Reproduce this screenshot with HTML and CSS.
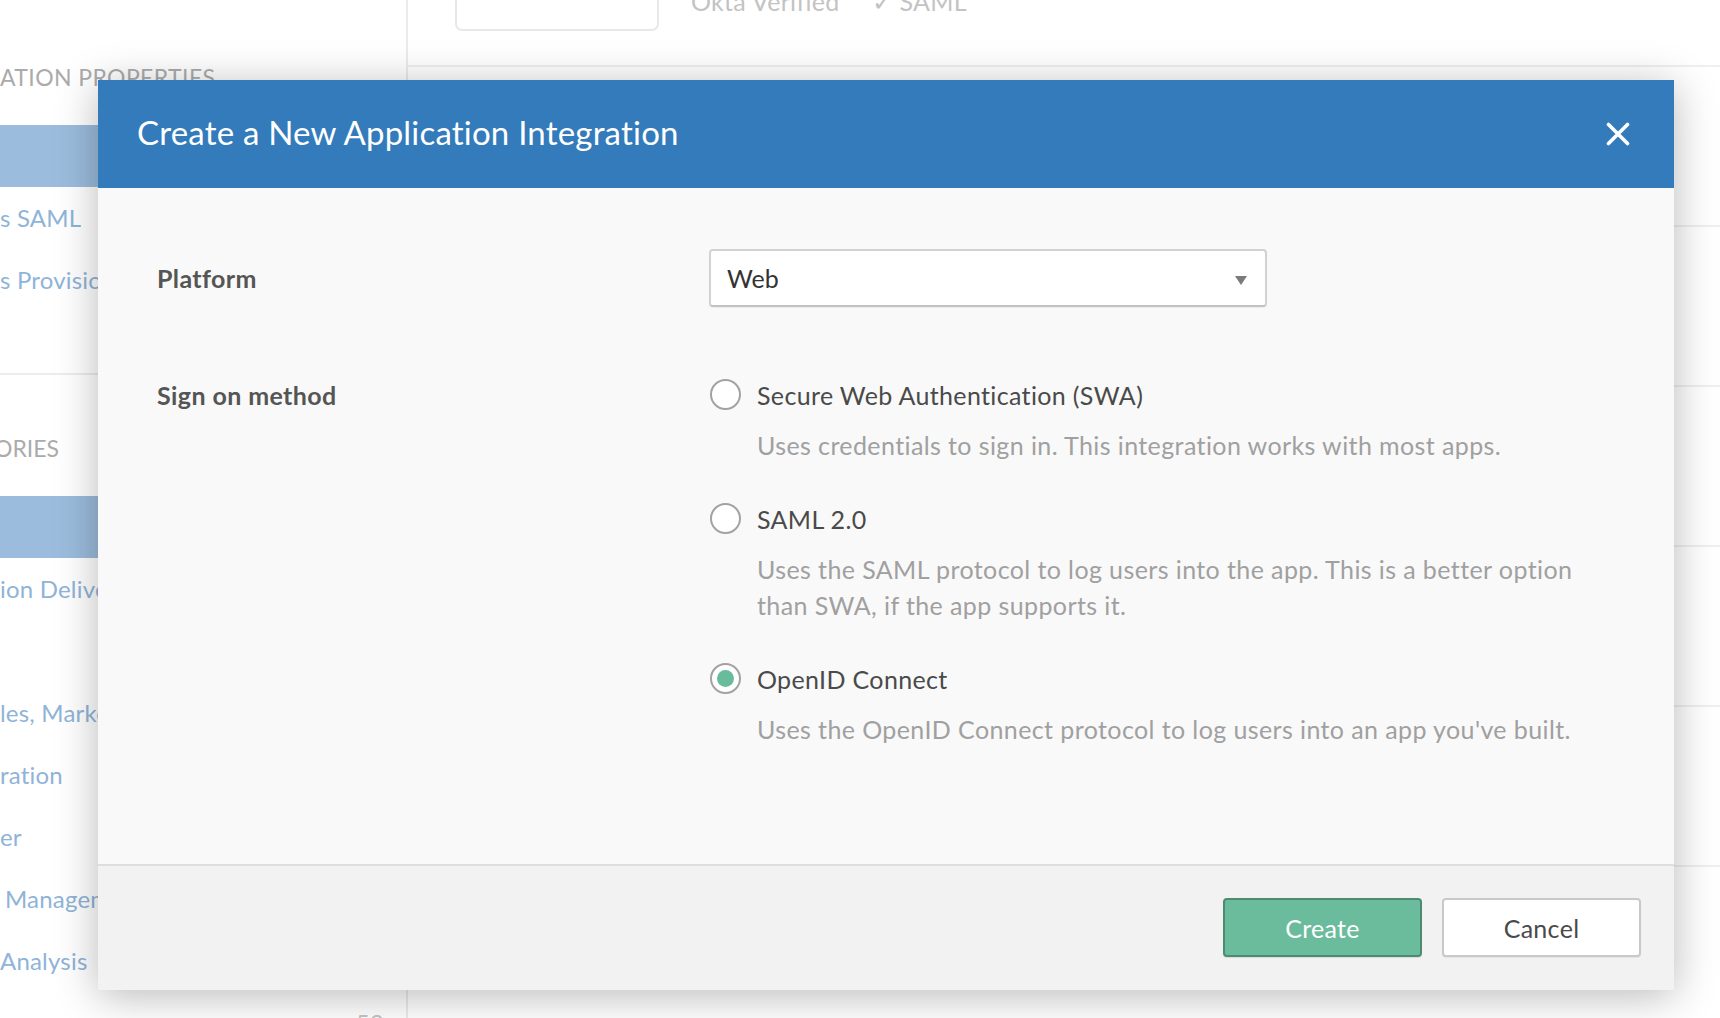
FILE: index.html
```html
<!DOCTYPE html>
<html lang="en">
<head>
<meta charset="utf-8">
<title>Create a New Application Integration</title>
<link rel="stylesheet" href="styles.css">
</head>
<body>
<div class="page">
  <aside class="sidebar">
    <div class="side-heading side-heading-first">ATION PROPERTIES</div>
    <ul class="side-list">
      <li class="side-item is-selected"></li>
      <li class="side-item">s SAML</li>
      <li class="side-item">s Provisioning</li>
      <li class="side-item"></li>
    </ul>
    <div class="side-sep"></div>
    <div class="side-heading side-heading-second">ORIES</div>
    <ul class="side-list">
      <li class="side-item is-selected"></li>
      <li class="side-item">ion Delivery</li>
      <li class="side-item"></li>
      <li class="side-item">les, Marketing</li>
      <li class="side-item">ration</li>
      <li class="side-item">er</li>
      <li class="side-item side-indent">Management</li>
      <li class="side-item">Analysis</li>
      <li class="side-item side-count-row"><span>ness</span><span class="side-count">53</span></li>
    </ul>
  </aside>
  <main class="main">
    <div class="app-row app-row-first">
      <div class="app-card"></div>
      <span class="app-meta">Okta Verified</span>
      <span class="app-meta app-meta-check">✓ SAML</span>
    </div>
    <div class="app-row"></div>
    <div class="app-row"></div>
    <div class="app-row"></div>
    <div class="app-row"></div>
    <div class="app-row"></div>
  </main>
</div>

<div class="modal">
  <div class="modal-header">
    <h1 class="modal-title">Create a New Application Integration</h1>
    <button class="modal-close" aria-label="Close">
      <svg width="24" height="24" viewBox="0 0 24 24"><path d="M2.5 2.5 L21.5 21.5 M21.5 2.5 L2.5 21.5" stroke="#fff" stroke-width="3.6" stroke-linecap="round" fill="none"/></svg>
    </button>
  </div>
  <div class="modal-body">
    <div class="form-row form-row-platform">
      <div class="form-label">Platform</div>
      <div class="form-control">
        <div class="select">
          <span class="select-value">Web</span>
          <span class="select-arrow"></span>
        </div>
      </div>
    </div>
    <div class="form-row form-row-method">
      <div class="form-label">Sign on method</div>
      <div class="form-control">
        <div class="option">
          <span class="radio"></span>
          <div class="option-text">
            <div class="option-label">Secure Web Authentication (SWA)</div>
            <div class="option-desc">Uses credentials to sign in. This integration works with most apps.</div>
          </div>
        </div>
        <div class="option">
          <span class="radio"></span>
          <div class="option-text">
            <div class="option-label">SAML 2.0</div>
            <div class="option-desc">Uses the SAML protocol to log users into the app. This is a better option than SWA, if the app supports it.</div>
          </div>
        </div>
        <div class="option">
          <span class="radio is-checked"></span>
          <div class="option-text">
            <div class="option-label">OpenID Connect</div>
            <div class="option-desc">Uses the OpenID Connect protocol to log users into an app you've built.</div>
          </div>
        </div>
      </div>
    </div>
  </div>
  <div class="modal-footer">
    <button class="btn btn-primary">Create</button>
    <button class="btn btn-default">Cancel</button>
  </div>
</div>
</body>
</html>
```

FILE: styles.css
```css
* { box-sizing: border-box; }

html, body {
  margin: 0;
  padding: 0;
  width: 1720px;
  height: 1018px;
  overflow: hidden;
  background: #fff;
  font-family: Lato, "Open Sans", Arial, sans-serif;
}

.page {
  display: flex;
  height: 1018px;
}

/* ---------- background sidebar ---------- */
.sidebar {
  width: 408px;
  flex: none;
  border-right: 2px solid #ebebeb;
  background: #fff;
  overflow: hidden;
}

.side-heading {
  height: 40px;
  line-height: 40px;
  font-size: 23px;
  color: #ababab;
  white-space: nowrap;
  margin-top: 53px;
  margin-bottom: 28px;
}

.side-heading-first {
  margin-top: 57px;
  margin-bottom: 28px;
  letter-spacing: 0.4px;
}

.side-heading-second {
  margin-left: -6px;
}

.side-list {
  list-style: none;
  margin: 0;
  padding: 0;
}

.side-item {
  height: 62px;
  line-height: 62px;
  font-size: 24px;
  letter-spacing: 0.2px;
  color: #8fb4d8;
  white-space: nowrap;
}

.side-item.is-selected {
  background: #9bbcdd;
}

.side-indent {
  padding-left: 5px;
}

.side-count-row {
  display: flex;
  justify-content: space-between;
  padding-right: 22px;
}

.side-count {
  color: #c4c4c4;
}

.side-sep {
  height: 2px;
  background: #ececec;
}

/* ---------- background main ---------- */
.main {
  flex: 1;
}

.app-row {
  height: 160px;
  border-bottom: 2px solid #efefef;
}

.app-row-first {
  height: 67px;
  display: flex;
  align-items: flex-start;
  padding-left: 47px;
}

.app-card {
  width: 204px;
  height: 31px;
  border: 2px solid #e8e8e8;
  border-top: none;
  border-radius: 0 0 7px 7px;
  background: #fff;
  margin-right: 32px;
}

.app-meta {
  font-size: 25px;
  line-height: 26px;
  margin-top: -12px;
  letter-spacing: 0.3px;
  color: #c3c3c3;
  margin-right: 32px;
  white-space: nowrap;
}

/* ---------- modal ---------- */
.modal {
  position: absolute;
  left: 98px;
  top: 80px;
  width: 1576px;
  background: #f9f9f9;
  box-shadow: 0 6px 40px rgba(0, 0, 0, 0.28);
}

.modal-header {
  height: 108px;
  background: #337bba;
  display: flex;
  align-items: center;
  justify-content: space-between;
  padding: 0 44px 0 39px;
}

.modal-title {
  margin: 0;
  font-size: 33px;
  font-weight: 400;
  letter-spacing: 0.2px;
  color: #fff;
  margin-top: -4px;
}

.modal-close {
  width: 24px;
  height: 24px;
  padding: 0;
  border: none;
  background: transparent;
  display: flex;
}

.modal-body {
  padding: 61px 60px 117px 59px;
}

.form-row {
  display: grid;
  grid-template-columns: 552px 1fr;
}

.form-row-platform {
  align-items: center;
  margin-bottom: 70px;
}

.form-label {
  font-size: 25px;
  font-weight: 700;
  letter-spacing: 0.4px;
  color: #555;
  line-height: 36px;
}

.select {
  width: 558px;
  height: 58px;
  background: #fff;
  border: 2px solid #d2d2d2;
  border-bottom-color: #c2c2c2;
  border-radius: 4px;
  box-shadow: 0 1px 1px rgba(0, 0, 0, 0.06);
  display: flex;
  align-items: center;
  justify-content: space-between;
  padding: 0 18px 0 16px;
}

.select-value {
  font-size: 25px;
  color: #333;
}

.select-arrow {
  width: 0;
  height: 0;
  border-left: 6.5px solid transparent;
  border-right: 6.5px solid transparent;
  border-top: 9px solid #7a7a7a;
  margin-top: 4px;
}

.option {
  display: flex;
  align-items: flex-start;
  margin-bottom: 38px;
}

.option:last-child {
  margin-bottom: 0;
}

.radio {
  flex: none;
  width: 31px;
  height: 31px;
  border-radius: 50%;
  border: 2px solid #a2a2a2;
  background: #fff;
  margin-top: 2px;
  margin-left: 1px;
  margin-right: 16px;
  display: flex;
  align-items: center;
  justify-content: center;
}

.radio.is-checked::after {
  content: "";
  width: 17px;
  height: 17px;
  border-radius: 50%;
  background: #68bc9b;
}

.option-text {
  width: 830px;
}

.option-label {
  font-size: 25px;
  line-height: 36px;
  letter-spacing: 0.35px;
  color: #4a4a4a;
}

.option-desc {
  margin-top: 14px;
  font-size: 25px;
  line-height: 36px;
  letter-spacing: 0.4px;
  color: #a0a0a0;
}

.modal-footer {
  border-top: 2px solid #dedede;
  background: #f2f2f2;
  padding: 32px 33px 33px;
  display: flex;
  justify-content: flex-end;
  gap: 20px;
}

.btn {
  width: 199px;
  height: 59px;
  border-radius: 4px;
  font-family: inherit;
  font-size: 25px;
  letter-spacing: 0.3px;
  cursor: pointer;
}

.btn-primary {
  background: #6bbc9c;
  border: 2px solid #4e8c71;
  color: #fff;
  box-shadow: 0 1px 1px rgba(0, 0, 0, 0.1);
}

.btn-default {
  background: #fff;
  border: 2px solid #c9c9c9;
  color: #4a4a4a;
  box-shadow: 0 1px 1px rgba(0, 0, 0, 0.06);
}
```
